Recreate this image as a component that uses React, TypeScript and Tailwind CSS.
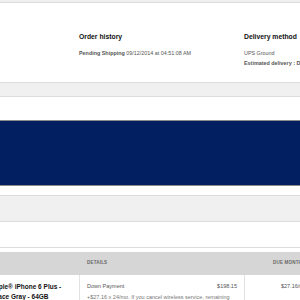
import React from 'react';

const font = { fontFamily: '"Liberation Sans", Arial, sans-serif' };

function OrderInfo() {
  return (
    <div className="flex h-[81px] border-y border-[#dcdcdc] bg-white pl-[79px]">
      <div className="w-[165px] shrink-0 pt-[30px]">
        <h3 className="text-[6.8px] leading-[8px] font-bold text-[#111]">Order history</h3>
        <p className="mt-[9px] whitespace-nowrap text-[5.4px] leading-[7px] text-[#555]">
          <span className="font-bold">Pending Shipping</span> 09/12/2014 at 04:51:08 AM
        </p>
      </div>
      <div className="shrink-0 pt-[30px]">
        <h3 className="text-[6.8px] leading-[8px] font-bold text-[#111]">Delivery method</h3>
        <p className="mt-[9px] whitespace-nowrap text-[5.4px] leading-[7px] text-[#555]">UPS Ground</p>
        <p className="mt-[3px] whitespace-nowrap text-[5.4px] leading-[7px] font-bold text-[#555]">
          Estimated delivery : Delayed
        </p>
      </div>
    </div>
  );
}

function DeviceTable() {
  return (
    <div>
      <div className="flex h-[23px] items-center bg-[#d6d6d6] text-[4.5px] font-bold tracking-[0.2px] text-[#666]">
        <div className="w-[80px] shrink-0" />
        <div className="w-[165px] shrink-0 pl-[7px]">DETAILS</div>
        <div className="shrink-0 whitespace-nowrap pl-[28px]">DUE MONTHLY</div>
      </div>
      <div className="flex bg-white">
        <div className="w-[80px] shrink-0 border-r border-[#e2e2e2] pt-[7px]">
          <div className="ml-[-10px] w-[88px] text-[6.5px] leading-[10px] font-bold text-[#111]">
            Apple® iPhone 6 Plus -<br />Space Gray - 64GB
          </div>
        </div>
        <div className="w-[165px] shrink-0 border-r border-[#e2e2e2] px-[7px] pt-[8px] text-[5.5px] text-[#555]">
          <div className="flex justify-between leading-[7px]">
            <span>Down Payment</span>
            <span>$198.15</span>
          </div>
          <p className="mt-[4px] whitespace-nowrap leading-[7px] text-[#777]">
            +$27.16 x 24/mo. If you cancel wireless service, remaining
          </p>
        </div>
        <div className="shrink-0 whitespace-nowrap pl-[36px] pt-[8px] text-[5.5px] leading-[7px] text-[#555]">$27.16/mo</div>
      </div>
    </div>
  );
}

export default function App() {
  return (
    <div className="h-[300px] w-[300px] overflow-hidden bg-white" style={font}>
      <div className="h-[2px] bg-[#f0f0f0]" />
      <OrderInfo />
      <div className="h-[13px] bg-[#f0f0f0]" />
      <div className="h-[24px] border-t border-[#dcdcdc] bg-white" />
      <div className="h-[66px] border-y border-[#8c8c8c] bg-[#022061]" />
      <div className="h-[9px] bg-white" />
      <div className="h-[26px] border-t border-[#dcdcdc] bg-[#f0f0f0]" />
      <div className="h-[27px] border-y border-[#dcdcdc] bg-white" />
      <div className="h-[4px] bg-white" />
      <DeviceTable />
    </div>
  );
}
